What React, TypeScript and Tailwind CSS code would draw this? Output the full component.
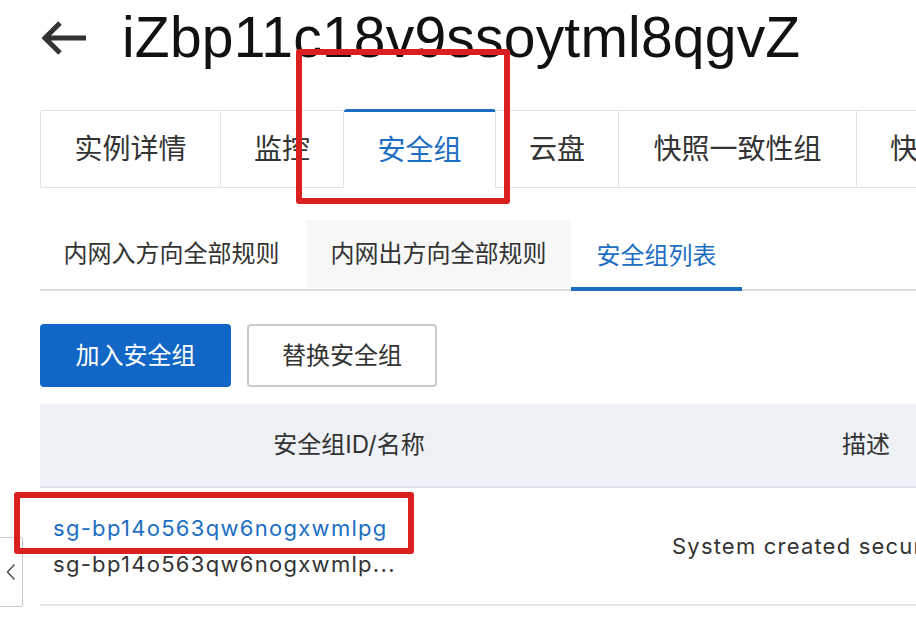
import React from "react";

const tabs = [
  { label: "实例详情", w: "w-[181px]" },
  { label: "监控", w: "w-[123px]" },
  { label: "安全组", w: "w-[152px]", active: true },
  { label: "云盘", w: "w-[123px]" },
  { label: "快照一致性组", w: "w-[238px]" },
  { label: "快照", w: "w-[123px]" },
];

const subTabs = [
  { label: "内网入方向全部规则", w: "w-[266px]" },
  { label: "内网出方向全部规则", w: "w-[265px]", muted: true },
  { label: "安全组列表", w: "w-[171px]", active: true },
];

function BackArrow() {
  return (
    <svg width="48" height="36" viewBox="0 0 48 36" fill="none" className="shrink-0">
      <path d="M46 18H6M20 3L5 18l15 15" stroke="#333" strokeWidth="5" strokeLinecap="butt" strokeLinejoin="miter" />
    </svg>
  );
}

export default function App() {
  return (
    <div className="relative w-[916px] h-[636px] overflow-hidden bg-white font-['Inter','Noto_Sans_CJK_SC',sans-serif] text-[#333]">
      <div className="pl-10">
        {/* header */}
        <div className="flex items-center mt-[9px] h-[57px]">
          <BackArrow />
          <h1 className="ml-[34px] text-[57px] leading-[57px] tracking-[0.2px] text-[#111] font-['Liberation_Sans',sans-serif] whitespace-nowrap">
            iZbp11c18v9ssoytml8qgvZ
          </h1>
        </div>

        {/* main tabs */}
        <div className="flex mt-[44px] h-[78px]">
          {tabs.map((t, i) =>
            t.active ? (
              <div
                key={t.label}
                className={`${t.w} shrink-0 -mt-px h-[79px] flex items-center justify-center rounded-t-[3px] border-t-[3px] border-r border-[#1b6ec2] border-r-[#e2e2e2] bg-white text-[28px] text-[#1b6ec2]`}
              >
                {t.label}
              </div>
            ) : (
              <div
                key={t.label}
                className={`${t.w} shrink-0 flex items-center justify-center border-y border-r border-[#e2e2e2] ${i === 0 ? "border-l rounded-tl-[3px]" : ""} text-[28px] text-[#333]`}
              >
                {t.label}
              </div>
            )
          )}
        </div>

        {/* sub tabs */}
        <div className="flex mt-[32px] border-b-2 border-[#dedede] w-[900px]">
          {subTabs.map((t) => (
            <div
              key={t.label}
              className={`${t.w} shrink-0 flex items-center justify-center text-[24px] ${
                t.active
                  ? "h-[71px] -mb-[2px] border-b-4 border-[#1b6ec2] text-[#1b6ec2] pt-[4px]"
                  : t.muted
                  ? "h-[68px] bg-[#f7f7f7]"
                  : "h-[68px] pr-[3px]"
              }`}
            >
              {t.label}
            </div>
          ))}
        </div>

        {/* actions */}
        <div className="flex gap-4 mt-[33px]">
          <button className="w-[191px] h-[63px] rounded-[4px] bg-[#1267c6] text-white text-[24px]">加入安全组</button>
          <button className="w-[190px] h-[63px] rounded-[4px] border-2 border-[#cbcbcb] bg-white text-[24px] text-[#333]">替换安全组</button>
        </div>

        {/* table */}
        <div className="mt-[17px] w-[1034px]">
          <div className="flex h-[84px] bg-[#eef1f6] border-b-2 border-[#e1e4ea] text-[24px]">
            <div className="w-[618px] flex items-center justify-center">安全组ID/名称</div>
            <div className="w-[416px] flex items-center justify-center">描述</div>
          </div>
          <div className="flex h-[118px] border-b-2 border-[#e6e6e6] text-[22px]">
            <div className="w-[618px] pl-[13px] flex flex-col justify-center leading-[36px] tracking-[1.3px]">
              <span className="text-[#1b6ec2]">sg-bp14o563qw6nogxwmlpg</span>
              <span className="text-[#333]">sg-bp14o563qw6nogxwmlp...</span>
            </div>
            <div className="w-[416px] pl-[14px] flex items-center whitespace-nowrap tracking-[1.2px]">System created security group</div>
          </div>
        </div>
      </div>

      {/* side collapse handle */}
      <div className="absolute left-0 top-[537px] w-[23px] h-[70px] border border-l-0 border-[#c9c9c9] rounded-r-[3px] bg-white flex items-center justify-center">
        <svg width="10" height="18" viewBox="0 0 10 18" fill="none">
          <path d="M8.5 1.5L1.5 9l7 7.5" stroke="#555" strokeWidth="1.6" />
        </svg>
      </div>

      {/* annotation boxes */}
      <div className="absolute left-[296px] top-[49px] w-[214px] h-[155px] border-[6px] border-[#d9201f] rounded-[3px]" />
      <div className="absolute left-[14px] top-[492px] w-[400px] h-[62px] border-[6px] border-[#d9201f] rounded-[3px]" />
    </div>
  );
}
